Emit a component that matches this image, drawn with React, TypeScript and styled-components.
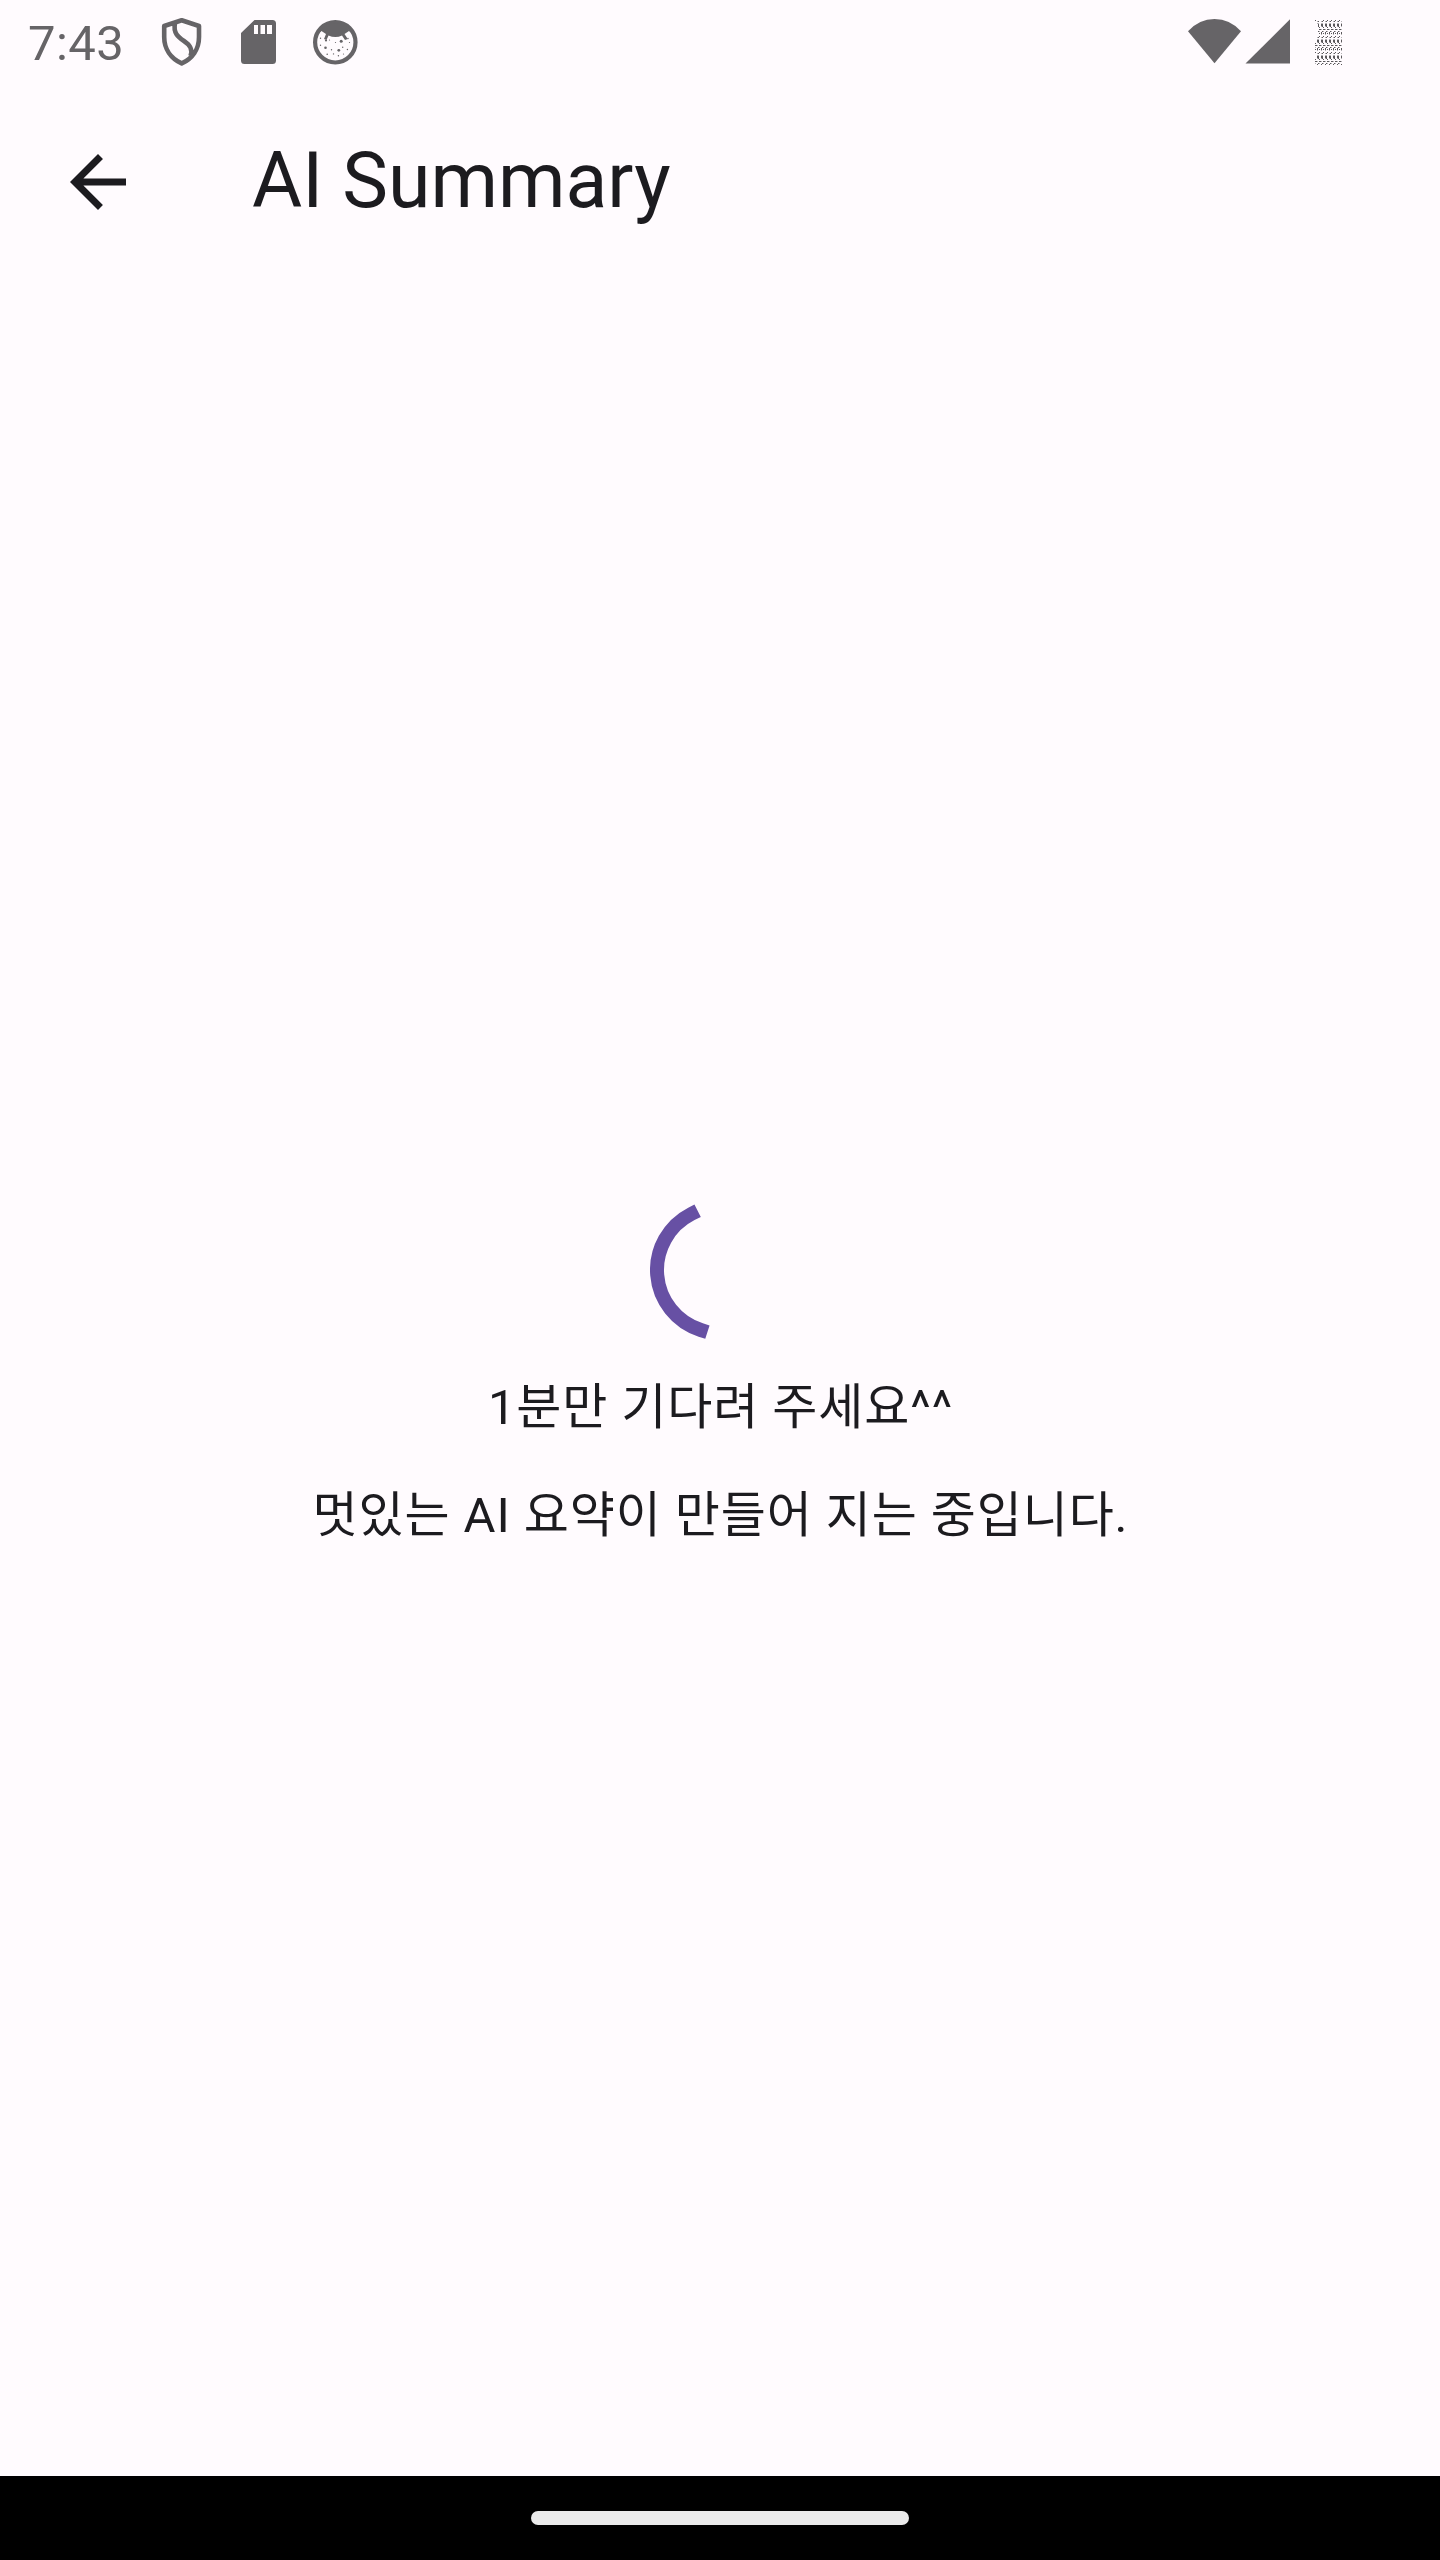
import React from 'react';
import styled, { createGlobalStyle } from 'styled-components';

const GlobalStyle = createGlobalStyle`
  * { box-sizing: border-box; }
  body { margin: 0; background: #fffbfe; }
`;

const Screen = styled.div`
  display: flex;
  flex-direction: column;
  width: 1440px;
  height: 2560px;
  background: #fffbfe;
  color: #1c1b1f;
  font-family: Roboto, 'Noto Sans CJK KR', sans-serif;
`;

const StatusBar = styled.header`
  display: flex;
  align-items: center;
  justify-content: space-between;
  height: 84px;
  padding: 0 98px 0 28px;
  color: #666467;
`;

const StatusGroup = styled.div`
  display: flex;
  align-items: center;
`;

const Clock = styled.span`
  width: 123px;
  font-size: 49px;
  letter-spacing: 0.4px;
  line-height: 84px;
  padding-top: 3px;
`;

const StatusIcon = styled.svg<{ $w: number; $gap?: number }>`
  display: block;
  width: ${(p) => p.$w}px;
  height: 84px;
  margin-left: ${(p) => p.$gap ?? 0}px;
  fill: currentColor;
`;

const TopBar = styled.div`
  display: flex;
  align-items: center;
  height: 196px;
  padding-left: 56px;
`;

const BackButton = styled.button`
  display: flex;
  width: 84px;
  height: 84px;
  margin-right: 112px;
  padding: 0;
  border: 0;
  background: none;
  color: inherit;
`;

const Title = styled.h1`
  margin: 0;
  padding-bottom: 2px;
  font-size: 77px;
  font-weight: 400;
  line-height: 98px;
`;

const Content = styled.main`
  display: flex;
  flex: 1;
  flex-direction: column;
  align-items: center;
  padding-top: 920px;
`;

const Spinner = styled.svg`
  display: block;
  width: 140px;
  height: 140px;
  margin-bottom: 33px;
`;

const Message = styled.p`
  margin: 0 0 38px;
  padding-left: 1px;
  font-size: 49px;
  line-height: 70px;
  letter-spacing: 0.9px;
  white-space: nowrap;
`;

const NavigationBar = styled.footer`
  display: flex;
  align-items: center;
  justify-content: center;
  height: 84px;
  background: #000;
`;

const HomeHandle = styled.div`
  width: 378px;
  height: 14px;
  border-radius: 7px;
  background: #ebebeb;
`;

const speckles = [
  [7.5, 18.3, 0.7], [13, 20.5, 1.1], [28.2, 21.3, 1.5], [35, 18.5, 0.7], [7.5, 25.2, 0.7],
  [12.5, 27.8, 1.3], [18.5, 29.8, 0.7], [25.8, 30.3, 1.4], [22.5, 22.5, 0.6], [29.7, 27.3, 0.7],
  [34.4, 29.5, 0.7], [36.5, 22.5, 0.6], [14.2, 34.2, 0.8], [20.5, 33.9, 0.7], [25.4, 35.8, 0.7],
  [16.5, 20, 0.6], [30.5, 34, 0.6],
];

const arcPoint = (degrees: number) => {
  const a = (degrees * Math.PI) / 180;
  return `${70 + 63 * Math.cos(a)} ${70 + 63 * Math.sin(a)}`;
};

function BatteryIcon() {
  return (
    <StatusIcon $w={27} $gap={24} viewBox="0 0 27 84" shapeRendering="crispEdges">
      <defs>
        <pattern id="dither" width="4" height="16" x="0" y="20" patternUnits="userSpaceOnUse">
          <path fill="#5a585b" d="M0 0h1v1h-1zM3 1h1v1h-1zM2 4h2v1h-2zM2 5h2v1h-2zM3 6h1v1h-1zM0 7h1v1h-1zM0 9h2v1h-2zM3 11h1v1h-1zM2 12h1v2h-1zM0 13h1v1h-1z" />
          <path fill="#b5b3b6" d="M2 1h1v1h-1zM2 3h2v1h-2zM2 6h1v1h-1zM2 9h1v1h-1zM0 11h1v1h-1zM2 14h1v1h-1z" />
        </pattern>
      </defs>
      <path fill="url(#dither)" d="M0 20h2v1h3v-1h22v45H0V37h3V24H0z" />
    </StatusIcon>
  );
}

export default function App() {
  return (
    <>
      <GlobalStyle />
      <Screen>
        <StatusBar>
          <StatusGroup>
            <Clock>7:43</Clock>
            <StatusIcon $w={42} $gap={10} viewBox="161 0 42 84">
              <path
                d="M181.7 20.2L164.2 26V37C164.2 49 171 58.500 181.700 63.400C192.500 58.500 199 49 199 37V26ZM175 23C173 33 178 37 184 41C190 45 193 49 190.500 56"
                fill="none"
                stroke="currentColor"
                strokeWidth="4.600"
                strokeLinejoin="round"
              />
            </StatusIcon>
            <StatusIcon $w={36} $gap={38} viewBox="241 0 36 84">
              <path
                fillRule="evenodd"
                d="M254.500 20H272.500Q276 20 276 23.500V60.500Q276 64 272.500 64H244.500Q241 64 241 60.500V33ZM254 25V34H258V25ZM260.500 25V34H265V25ZM267 25V34H272V25Z"
              />
            </StatusIcon>
            <StatusIcon $w={45} $gap={36} viewBox="0 -20 45 84">
              <circle cx="22.300" cy="22.300" r="20.200" fill="none" stroke="currentColor" strokeWidth="4.200" />
              <path d="M6 13C14 0 31 0 38.500 13L36 11L31.500 14L34.800 19L32 20L29 15.500Q22.500 18.500 15.500 15.500L13.500 20L11 19L13 14L8.500 11Z" />
              {speckles.map(([x, y, r], i) => (
                <circle key={i} cx={x} cy={y} r={r} />
              ))}
            </StatusIcon>
          </StatusGroup>
          <StatusGroup>
            <StatusIcon $w={54} viewBox="1187 0 54 84">
              <path d="M1188 31.300Q1199 19 1214.500 19T1241 31.300L1214.500 63.300Z" />
            </StatusIcon>
            <StatusIcon $w={46} $gap={4} viewBox="1245 0 46 84">
              <path d="M1245.500 63.500L1290 19.300V63.500Z" />
            </StatusIcon>
            <BatteryIcon />
          </StatusGroup>
        </StatusBar>
        <TopBar>
          <BackButton aria-label="Back">
            <svg width="84" height="84" viewBox="0 0 24 24" fill="currentColor">
              <path d="M20 11H7.830l5.590-5.590L12 4l-8 8 8 8 1.410-1.410L7.830 13H20z" />
            </svg>
          </BackButton>
          <Title>AI Summary</Title>
        </TopBar>
        <Content>
          <Spinner viewBox="0 0 140 140">
            <path
              d={`M${arcPoint(107.8)}A63 63 0 0 1 ${arcPoint(243)}`}
              fill="none"
              stroke="#6750a4"
              strokeWidth="14"
              strokeLinecap="square"
            />
          </Spinner>
          <Message>1분만 기다려 주세요^^</Message>
          <Message>멋있는 AI 요약이 만들어 지는 중입니다.</Message>
        </Content>
        <NavigationBar>
          <HomeHandle />
        </NavigationBar>
      </Screen>
    </>
  );
}
